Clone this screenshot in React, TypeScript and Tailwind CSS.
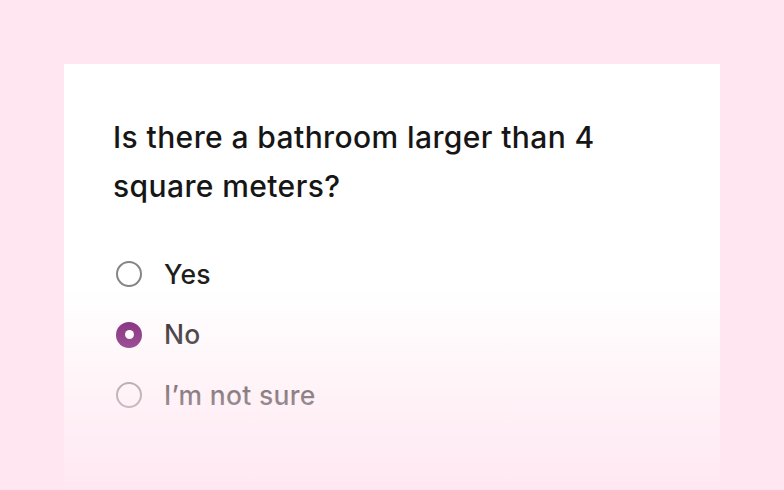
const options = [
  { label: 'Yes', checked: false },
  { label: 'No', checked: true },
  { label: 'I’m not sure', checked: false },
];

const Radio = ({ checked }: { checked: boolean }) =>
  checked ? (
    <span className="flex h-[26px] w-[26px] items-center justify-center rounded-full bg-[#761770]">
      <span className="h-[9px] w-[9px] rounded-full bg-white" />
    </span>
  ) : (
    <span className="h-[26px] w-[26px] rounded-full border-[2.5px] border-[#858585] bg-white" />
  );

export default function App() {
  return (
    <div className="h-[490px] w-[784px] overflow-hidden bg-[#ffe6f0] pl-16 pt-16 font-['Inter',sans-serif]">
      <div className="relative h-[426px] w-[656px] bg-white pl-[49px] pt-[49px]">
        <h1 className="max-w-[530px] text-[30px] font-[450] leading-[49px] tracking-[0.4px] text-[#161616]">
          Is there a bathroom larger than 4 square meters?
        </h1>
        <div className="mt-[43px] flex flex-col gap-[20.5px]">
          {options.map((o) => (
            <label key={o.label} className="flex h-[40px] items-center gap-[22px] pl-[3px]">
              <Radio checked={o.checked} />
              <span className="text-[26.5px] font-[450] leading-none tracking-[0.3px] text-[#1e1e1e]">{o.label}</span>
            </label>
          ))}
        </div>
        {/* fade over the lower part */}
        <div className="pointer-events-none absolute inset-x-0 bottom-0 h-[200px] bg-gradient-to-b from-[#ffe6f0]/0 to-[#ffe6f0]/95" />
      </div>
    </div>
  );
}
